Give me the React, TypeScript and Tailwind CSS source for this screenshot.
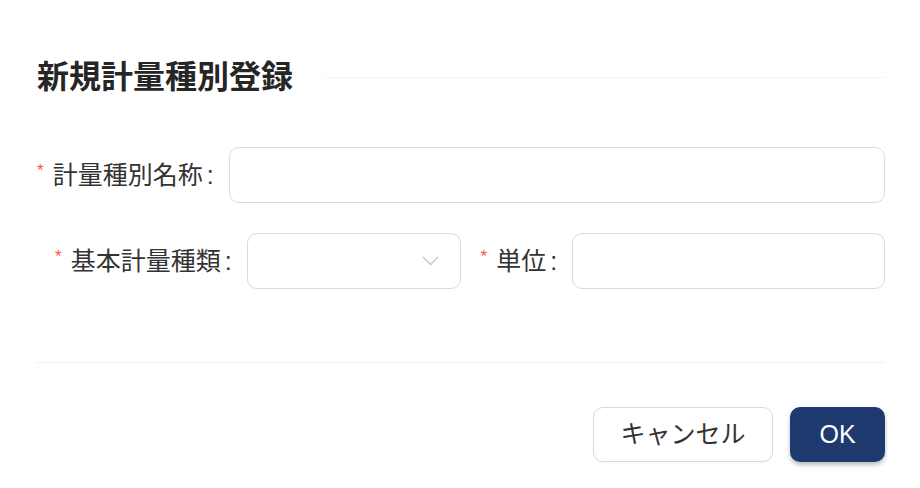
import React from 'react';

const FONT = "font-['Liberation_Sans','Noto_Sans_CJK_JP',sans-serif]";

function Label({ text }: { text: string }) {
  return (
    <div className="flex items-center shrink-0 text-[25px] leading-none text-[#333333]">
      <span className="text-[#ff4d4f] text-[17px] mr-[9px] -mt-[10px]">*</span>
      <span>{text}</span>
      <span className="ml-[4px] mr-[15px]">:</span>
    </div>
  );
}

export default function App() {
  return (
    <div className={`${FONT} w-[920px] h-[488px] bg-white pl-[37px] pr-[35px] pt-[57px]`}>
      <div className="flex items-center gap-[32px] h-[40px]">
        <h2 className="text-[32px] font-bold leading-none text-[#262626]">新規計量種別登録</h2>
        <div className="flex-1 h-px bg-[#f2f2f2]" />
      </div>

      <div className="mt-[50px]">
        <div className="flex items-center h-[56px]">
          <Label text="計量種別名称" />
          <input className="flex-1 h-[56px] border border-[#d9d9d9] rounded-[10px] px-4 outline-none" />
        </div>

        <div className="flex items-center h-[56px] mt-[30px] pl-[18px]">
          <Label text="基本計量種類" />
          <div className="w-[214px] h-[56px] border border-[#d9d9d9] rounded-[10px] flex items-center justify-end pr-[21px]">
            <svg width="17" height="10" viewBox="0 0 17 10" fill="none">
              <polyline points="1,1 8.5,8.5 16,1" stroke="#c4c4c4" strokeWidth="1.3" />
            </svg>
          </div>
          <div className="ml-[20px] flex items-center flex-1">
            <Label text="単位" />
            <input className="flex-1 h-[56px] border border-[#d9d9d9] rounded-[10px] px-4 outline-none" />
          </div>
        </div>
      </div>

      <div className="mt-[73px] h-px bg-[#f0f0f0]" />

      <div className="mt-[44px] flex justify-end gap-[17px]">
        <button className="w-[180px] h-[55px] border border-[#d9d9d9] rounded-[10px] bg-white text-[25px] text-[#333333] shadow-[0_2px_0_rgba(0,0,0,0.02)]">
          キャンセル
        </button>
        <button className="w-[95px] h-[55px] rounded-[10px] bg-[#1f3a6f] text-white text-[25px] shadow-[0_3px_4px_rgba(0,0,0,0.25)]">
          OK
        </button>
      </div>
    </div>
  );
}
